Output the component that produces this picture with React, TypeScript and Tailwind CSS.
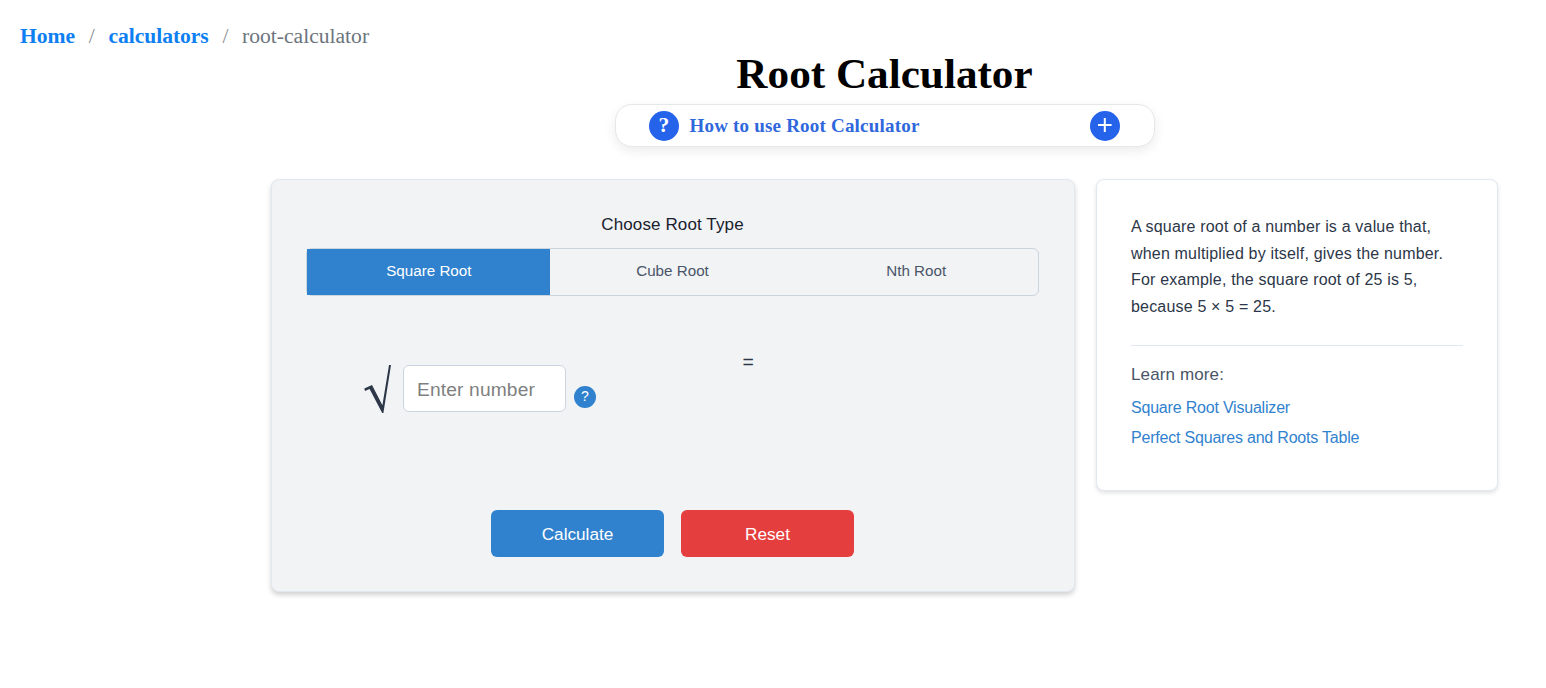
import React from "react";

const tabs = ["Square Root", "Cube Root", "Nth Root"];

function Breadcrumb() {
  return (
    <nav className="flex h-[49px] items-start pt-[24px] pl-5 font-['Liberation_Serif',serif] text-[21.6px] leading-[25px] whitespace-pre">
      <a href="#" className="w-[55px] font-bold text-[#0d7ff2]">Home</a>
      <span className="w-[33.5px] text-center text-[#8a9096]">/</span>
      <a href="#" className="w-[100.5px] font-bold tracking-[-0.05px] text-[#0d7ff2]">calculators</a>
      <span className="w-[33px] text-center text-[#8a9096]">/</span>
      <span className="text-[#6c757d]">root-calculator</span>
    </nav>
  );
}

function HowTo() {
  return (
    <button className="mt-[6px] flex h-[43px] w-[540px] items-center rounded-[17px] border border-[#e5e7eb] bg-white pr-[34px] pl-[33px] shadow-[0_4px_12px_rgba(0,0,0,0.08)]">
      <span className="flex size-[30px] items-center justify-center rounded-full bg-[#2563eb] pl-px font-['Liberation_Serif',serif] text-[21.6px] leading-[29px] font-bold text-white">?</span>
      <span className="ml-[11px] pt-[2px] font-['Liberation_Serif',serif] text-[19px] font-bold tracking-[0.2px] text-[#2f67dc]">How to use Root Calculator</span>
      <svg className="ml-auto size-[30px]" viewBox="0 0 30 30">
        <circle cx="15" cy="15" r="15" fill="#2563eb" />
        <path d="M14.8 7v14M8 14h13.6" stroke="white" strokeWidth="2" />
      </svg>
    </button>
  );
}

function RadicalSign() {
  return (
    <svg className="mt-[10px] h-[50px] w-[28px]" viewBox="0 0 28 50" fill="#2d3748" role="img" aria-label="square root">
      <path d="M0.3 24.6 8 21 18.4 41.2 25 1 27 1 19.4 49 18.2 49 5.6 25 1 27Z" />
    </svg>
  );
}

function Calculator() {
  return (
    <section className="flex h-[413px] w-[804px] flex-col items-center rounded-[8px] border border-[#e2e8f0] bg-[#f1f3f5] pt-[34px] pr-[36px] pl-[34px] shadow-[0_3px_5px_rgba(0,0,0,0.18)]">
      <h2 className="pl-px text-[17px] leading-[22px] tracking-[0.12px] text-[#1a202c]">Choose Root Type</h2>
      <div className="mt-[12px] grid h-[48px] w-[733px] grid-cols-3 rounded-[6px] border border-[#cbd5e0] text-[15.2px]">
        {tabs.map((tab, i) => (
          <button
            key={tab}
            className={i === 0 ? "bg-[#3182ce] pb-[2px] pl-px text-white" : "pb-[2px] pl-px text-[#4a5568]"}
          >
            {tab}
          </button>
        ))}
      </div>
      <div className="mt-[58px] flex h-[156px] w-full items-start pl-[58px] text-[#2d3748]">
        <RadicalSign />
        <input
          placeholder="Enter number"
          className="mt-[11px] ml-[11px] h-[47px] w-[163px] rounded-[6px] border border-[#cbd5e0] bg-white px-[13px] pt-[2px] text-[19.2px] tracking-[0.15px] placeholder:text-[#808080]"
        />
        <span className="mt-[32px] ml-[8px] flex size-[22px] items-center justify-center rounded-full bg-[#3182ce] pb-[2px] text-[14px] leading-none font-medium text-white">?</span>
        <span className="ml-[146.5px] -mt-[2px] text-[19.4px] leading-[20px]">=</span>
      </div>
      <div className="flex gap-[17px] text-[17.2px] text-white">
        <button className="h-[47px] w-[173px] rounded-[6px] bg-[#3182ce] pt-[2px] pl-px">Calculate</button>
        <button className="h-[47px] w-[173px] rounded-[6px] bg-[#e53e3e] pt-[2px] pl-px">Reset</button>
      </div>
    </section>
  );
}

function InfoPanel() {
  return (
    <aside className="h-[312px] w-[402px] rounded-[8px] border border-[#e2e8f0] bg-white px-[34px] pt-[34px] shadow-[0_2px_4px_rgba(0,0,0,0.12)]">
      <p className="text-[16px] leading-[26.6px] tracking-[0.18px] whitespace-nowrap text-[#2d3748]">
        A square root of a number is a value that,<br />
        when multiplied by itself, gives the number.<br />
        For example, the square root of 25 is 5,<br />
        because 5 × 5 = 25.
      </p>
      <div className="mt-[25px] flex flex-col items-start border-t border-[#e2e8f0] pt-[18px]">
        <h3 className="text-[17px] leading-[22px] tracking-[0.12px] text-[#4a5568]">Learn more:</h3>
        <a href="#" className="mt-[11px] text-[16px] leading-[22px] tracking-[-0.2px] text-[#3182ce]">Square Root Visualizer</a>
        <a href="#" className="mt-[8px] text-[16px] leading-[22px] tracking-[-0.2px] text-[#3182ce]">Perfect Squares and Roots Table</a>
      </div>
    </aside>
  );
}

export default function App() {
  return (
    <div className="h-[688px] w-[1546px] overflow-hidden bg-white font-['Liberation_Sans',Arial,sans-serif]">
      <Breadcrumb />
      <main className="ml-[271px] flex w-[1227px] flex-col items-center">
        <h1 className="font-['Liberation_Serif',serif] text-[43.2px] leading-[49px] font-bold text-black">Root Calculator</h1>
        <HowTo />
        <div className="mt-[32px] flex w-full items-start justify-between">
          <Calculator />
          <InfoPanel />
        </div>
      </main>
    </div>
  );
}
